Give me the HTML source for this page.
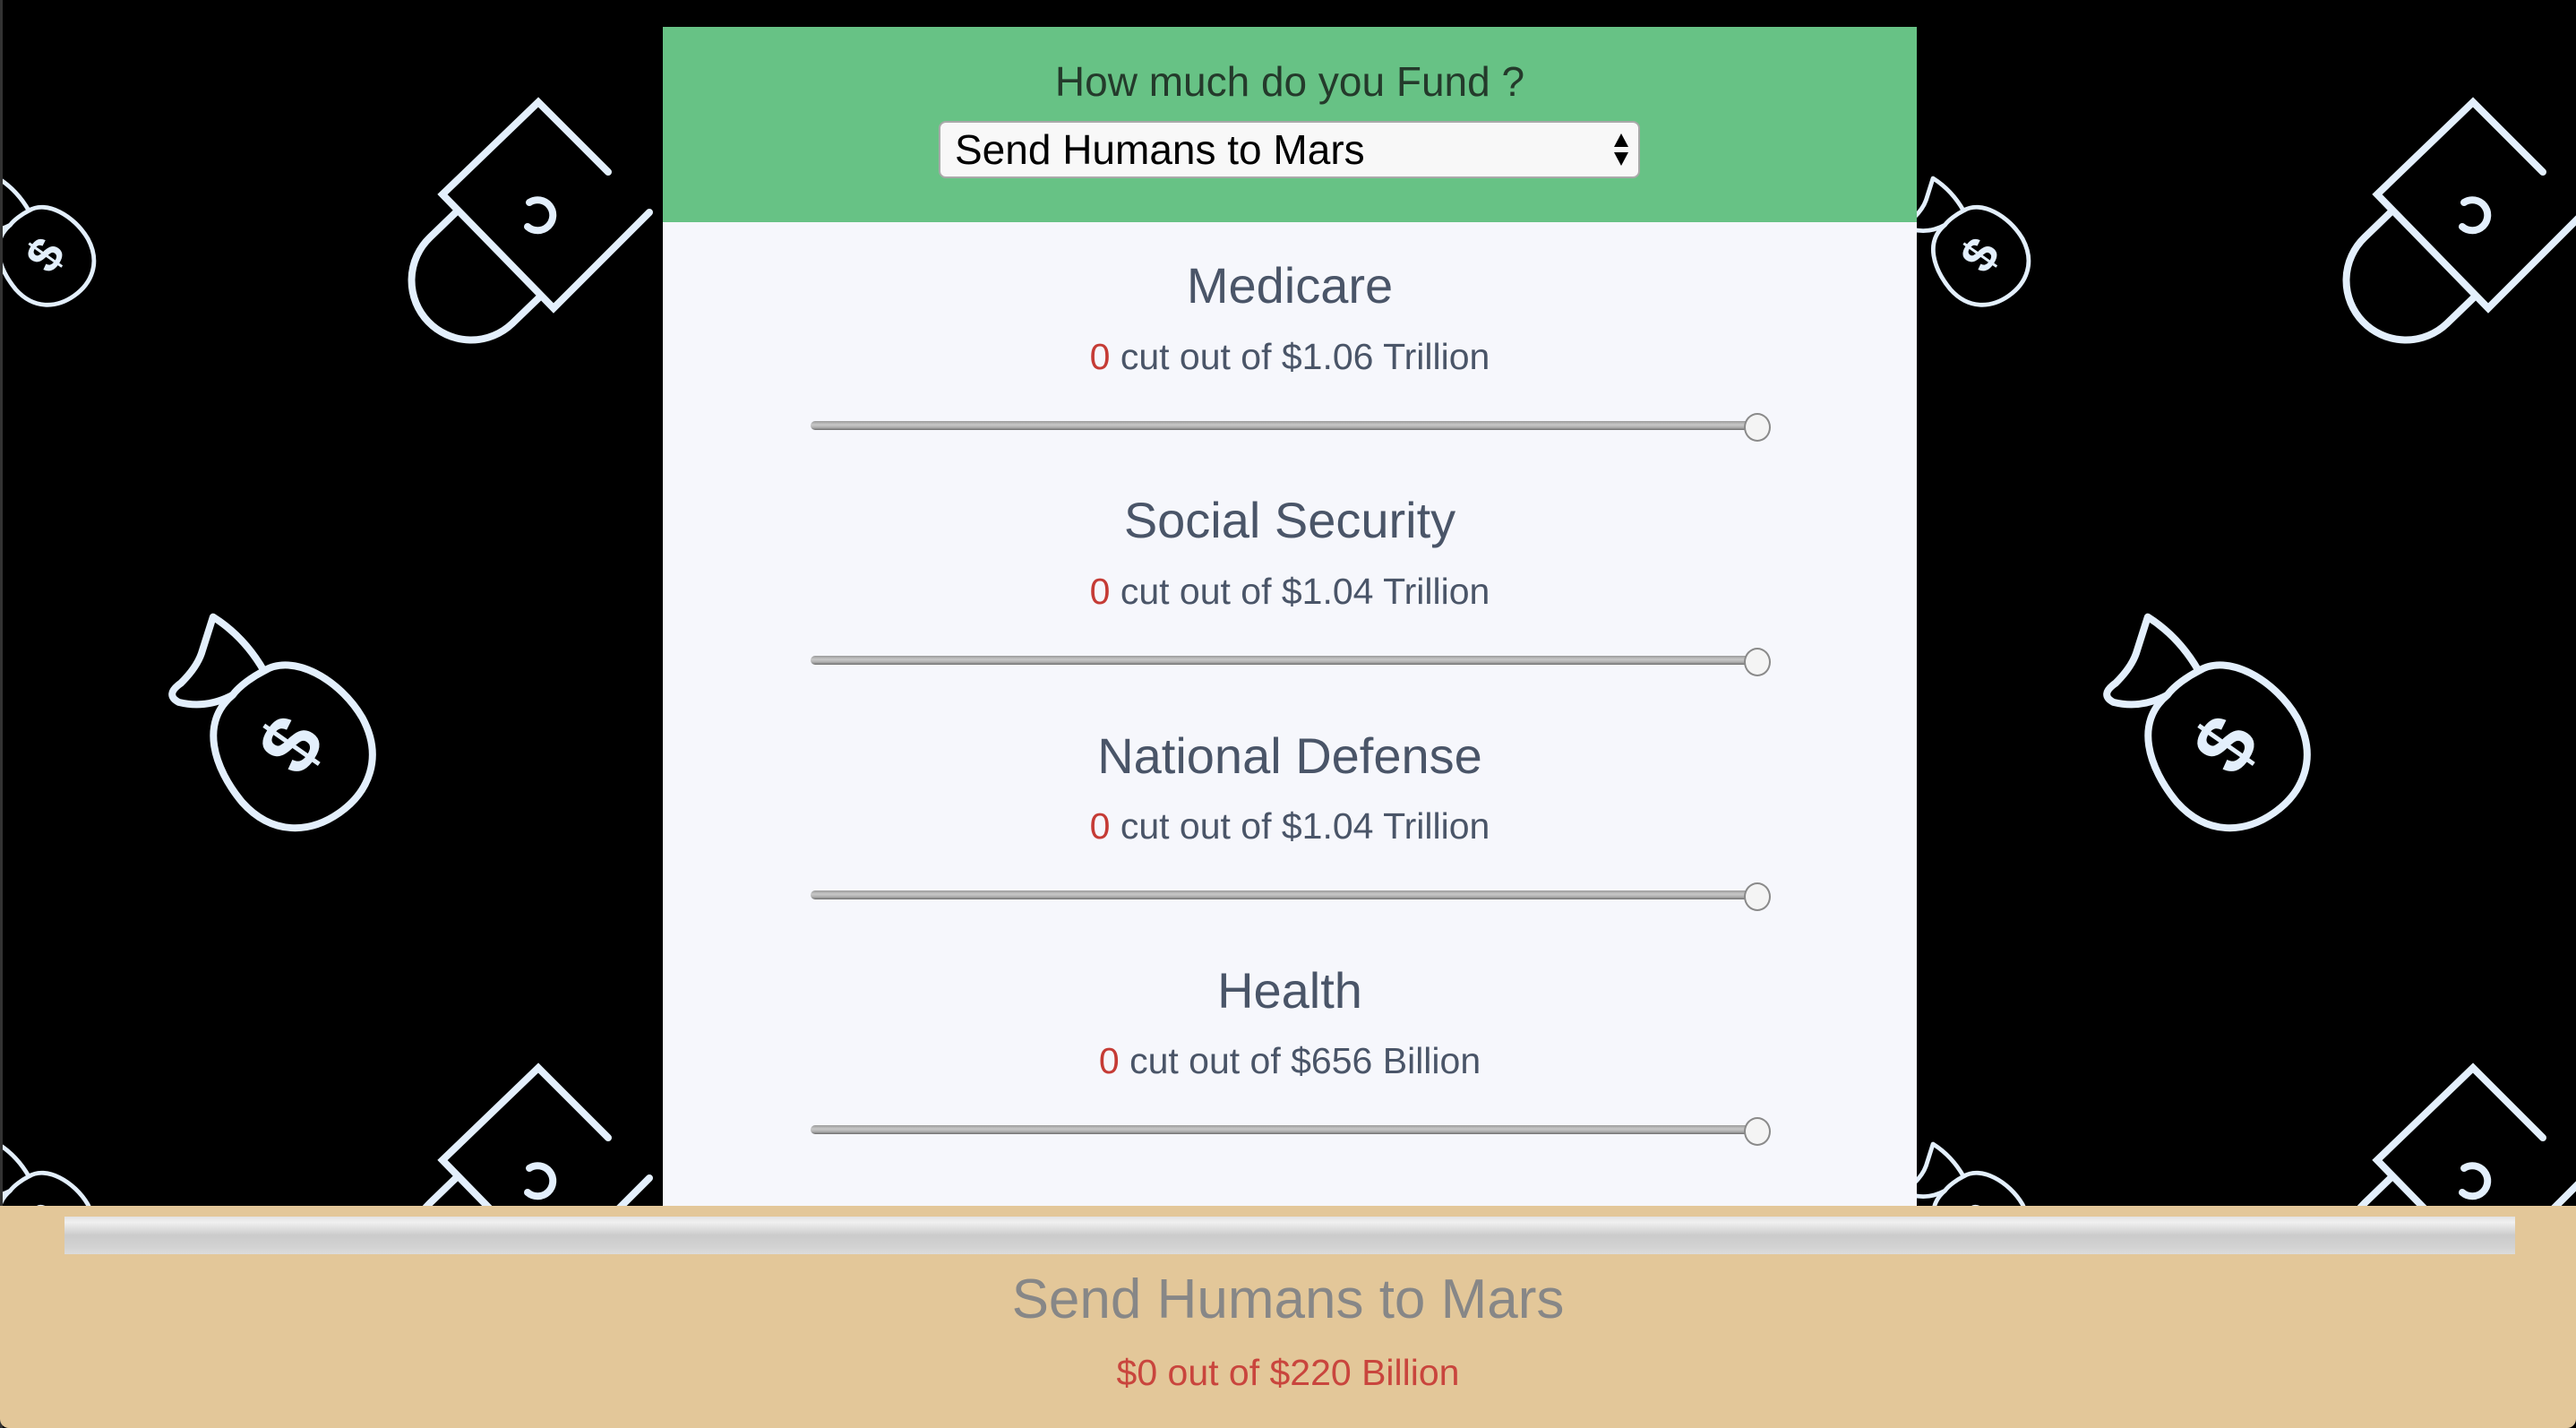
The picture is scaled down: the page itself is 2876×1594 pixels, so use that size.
<!DOCTYPE html>
<html><head><meta charset="utf-8"><style>
html,body{margin:0;padding:0;width:2876px;height:1594px;overflow:hidden;}
body{background:#000;position:relative;font-family:"Liberation Sans",sans-serif;}
#bg{position:absolute;left:0;top:0;display:block;}
.panel{position:absolute;left:740px;top:30px;width:1400px;height:1316px;background:#f6f7fc;}
.head{position:absolute;left:0;top:0;width:1400px;height:218px;background:#67c285;}
.q{position:absolute;left:0;width:1400px;top:33px;text-align:center;font-size:46px;line-height:56px;color:#243a2b;}
.sel{position:absolute;left:308px;top:105px;width:783px;height:64px;background:#f8f8f8;border:2px solid #a9a9a9;border-radius:8px;box-sizing:border-box;}
.sel span{position:absolute;left:16px;top:5px;font-size:46px;line-height:50px;color:#000;}
.arr{position:absolute;right:8px;top:10px;}
.t{position:absolute;left:0;width:1400px;text-align:center;font-size:56px;line-height:64px;color:#4a5568;}
.s{position:absolute;left:0;width:1400px;text-align:center;font-size:41px;line-height:50px;color:#4a5568;}
.s b{font-weight:normal;color:#c53b35;}
.track{position:absolute;left:165px;width:1070px;height:10px;border-radius:5px;background:linear-gradient(#9a9a9a,#c8c8c8 40%,#b0b0b0 70%,#6e6e6e);}
.thumb{position:absolute;left:1207px;width:26px;height:28px;border-radius:50%;background:#f4f4f4;border:2px solid #8a8a8a;}
.bottom{position:absolute;left:0;top:1346px;width:2876px;height:248px;background:#e3c799;border-radius:0 0 10px 10px;}
.bar{position:absolute;left:72px;top:12px;width:2736px;height:42px;background:linear-gradient(#e2e2e2,#f0f0f0 15%,#cbcbcb 50%,#d2d2d2 80%,#dcdcdc);}
.bt{position:absolute;left:0;width:2876px;text-align:center;top:70px;font-size:62px;line-height:70px;color:#878787;}
.bs{position:absolute;left:0;width:2876px;text-align:center;top:161px;font-size:41px;line-height:50px;color:#c9453d;}
</style></head><body>
<svg id="bg" width="2876" height="1594" xmlns="http://www.w3.org/2000/svg">
<defs>
<g id="lock" fill="none" stroke="#e3effc" stroke-width="8" stroke-linecap="round" stroke-linejoin="miter">
<path d="M725,237 L618,344 L494,217 L601,114 L679,192"/>
<path d="M509,237 L480,265 A66,66 0 0 0 572,361 L601,333"/>
<path d="M591,226 A17,17 0 1 1 589,253"/>
</g>
<g id="bag">
<g fill="none" stroke="#e3effc" stroke-width="8" stroke-linejoin="round">
<path d="M-22,-84 C-70,-80 -86,-30 -82,20 C-76,70 -40,92 0,92 C40,92 76,70 82,20 C86,-30 60,-84 22,-86 C8,-88 -10,-88 -22,-84Z"/>
<path d="M-22,-84 Q-55,-88 -76,-112 Q-84,-128 -62,-128 Q-38,-132 -24,-142 L10,-168 Q26,-130 22,-86"/>
</g>
<text x="0" y="30" text-anchor="middle" font-family="Liberation Sans" font-weight="bold" font-size="92" fill="#e3effc" transform="rotate(-20)">$</text>
</g>
</defs>
<g id="tile">
<use href="#lock"/>
<g transform="translate(326,832) rotate(-35)"><use href="#bag"/></g>
<g transform="translate(51,285) rotate(-35) scale(0.6)"><use href="#bag"/></g>
</g>
<use href="#tile" transform="translate(2160,0)"/>
<use href="#tile" transform="translate(0,1078)"/>
<use href="#tile" transform="translate(2160,1078)"/>
<rect x="0" y="0" width="3" height="1594" fill="#333"/>
</svg>
<div class="panel">
<div class="head">
<div class="q">How much do you Fund ?</div>
<div class="sel"><span>Send Humans to Mars</span>
<svg class="arr" width="22" height="40"><path d="M11,2 L19,17 L3,17Z M3,23 L19,23 L11,38Z" fill="#000"/></svg></div>
</div>
<div class="t" style="top:257px">Medicare</div>
<div class="s" style="top:343px"><b>0</b> cut out of $1.06 Trillion</div>
<div class="track" style="top:440px"></div><div class="thumb" style="top:431px"></div>

<div class="t" style="top:519px">Social Security</div>
<div class="s" style="top:605px"><b>0</b> cut out of $1.04 Trillion</div>
<div class="track" style="top:702px"></div><div class="thumb" style="top:693px"></div>

<div class="t" style="top:782px">National Defense</div>
<div class="s" style="top:867px"><b>0</b> cut out of $1.04 Trillion</div>
<div class="track" style="top:964px"></div><div class="thumb" style="top:955px"></div>

<div class="t" style="top:1044px">Health</div>
<div class="s" style="top:1129px"><b>0</b> cut out of $656 Billion</div>
<div class="track" style="top:1226px"></div><div class="thumb" style="top:1217px"></div>
</div>
<div class="bottom">
<div class="bar"></div>
<div class="bt">Send Humans to Mars</div>
<div class="bs">$0 out of $220 Billion</div>
</div>
</body></html>
